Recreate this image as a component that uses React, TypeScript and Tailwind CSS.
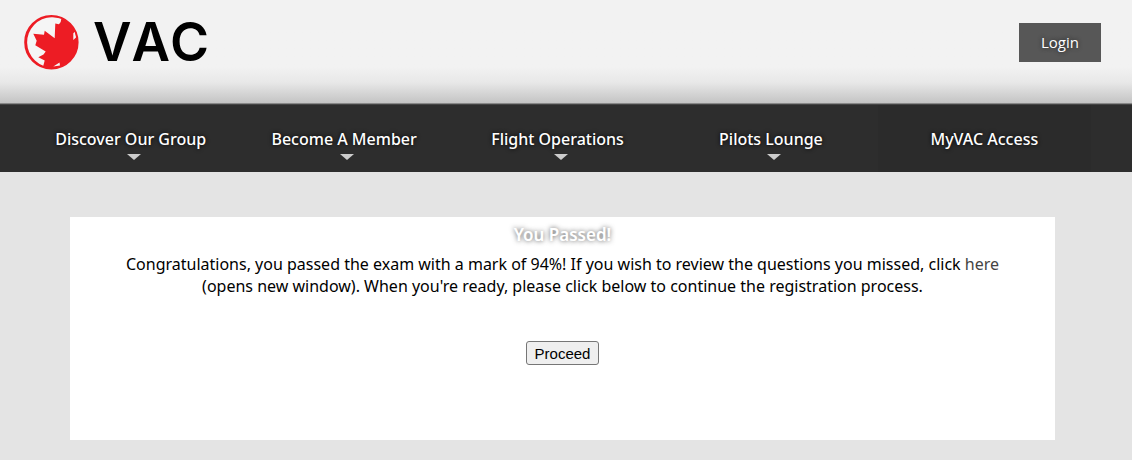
import React from "react";

const items = [
  { label: "Discover Our Group", menu: true },
  { label: "Become A Member", menu: true },
  { label: "Flight Operations", menu: true },
  { label: "Pilots Lounge", menu: true },
  { label: "MyVAC Access", menu: false },
];

function Logo() {
  return (
    <a href="#" aria-label="VAC home" className="flex items-center gap-3.5">
      <svg className="size-14" viewBox="0 0 56 56" aria-hidden="true">
        <circle cx="28.4" cy="28.2" r="26.3" fill="#ed1c24" />
        <path
          fill="#f5f5f5"
          d="M38.3 4.8L37.7 8 36 10.3 32.3 9.5 31.7 24.3 21.700 16.7 21 20.700 10.300 19.700 13.700 26.700 12.300 31.300 22.700 37.500 20.500 40.500 15.300 43.300 21.700 46.500 20.300 51.800A25 25 0 0 1 38.300 4.800zM30.300 52.500L36.500 48.600 37 51.500zM50.300 19.300L52.200 17.500 53 23.500 50.300 26z"
        />
        <circle cx="28.4" cy="28.2" r="26.3" fill="none" stroke="#ed1c24" strokeWidth="1.8" />
      </svg>
      <span className="font-['Inter',sans-serif] text-[53px] leading-none font-semibold text-black [font-kerning:none]">
        VAC
      </span>
    </a>
  );
}

export default function App() {
  return (
    <div className="min-h-screen bg-[#e4e4e4] pb-5 font-['Noto_Sans',sans-serif] text-base text-black">
      <header className="flex h-[104px] items-start justify-between border-b border-[#888888] bg-linear-to-b from-[#f2f2f2] from-65% via-[#e8e8e8] via-80% to-[#c4c4c4] pr-[31px] pl-[23px]">
        <div className="pt-3.5">
          <Logo />
        </div>
        <button
          type="button"
          className="mt-[23px] h-[39px] bg-[#575757] px-[22px] font-['Open_Sans',sans-serif] text-[15px] font-medium text-white text-shadow-[0_0_4px_#222222]"
        >
          Login
        </button>
      </header>
      <nav className="flex h-[68px] border-t border-[#444444] bg-[#2d2d2d] pr-[41px] pl-6">
        {items.map((item) => (
          <a
            key={item.label}
            href="#"
            className="flex flex-1 flex-col items-center pt-[23px] leading-[22px] font-medium text-white last:bg-[#2b2b2b] text-shadow-[0_0_4px_#000000]"
          >
            {item.label}
            {item.menu && (
              <span className="mt-1 ml-1.5 border-x-[7px] border-t-[6px] border-x-transparent border-t-[#cccccc]" />
            )}
          </a>
        ))}
      </nav>
      <main className="mt-[45px] mr-[77px] ml-[70px] h-[223px] bg-white px-12 pt-[7px] text-center leading-[22px]">
        <h1 className="text-[17px] font-semibold text-white text-shadow-[0_0_5px_#555555]">
          You Passed!
        </h1>
        <p className="mt-[7px]">
          Congratulations, you passed the exam with a mark of 94%! If you wish to review the
          questions you missed, click{" "}
          <a href="#" className="text-[#444444]">
            here
          </a>{" "}
          (opens new window). When you're ready, please click below to continue the registration
          process.
        </p>
        <button
          type="button"
          className="mt-11 h-6 rounded-[3px] border border-[#767676] bg-[#efefef] px-2 font-['Liberation_Sans',sans-serif] text-[15px] leading-6"
        >
          Proceed
        </button>
      </main>
    </div>
  );
}
